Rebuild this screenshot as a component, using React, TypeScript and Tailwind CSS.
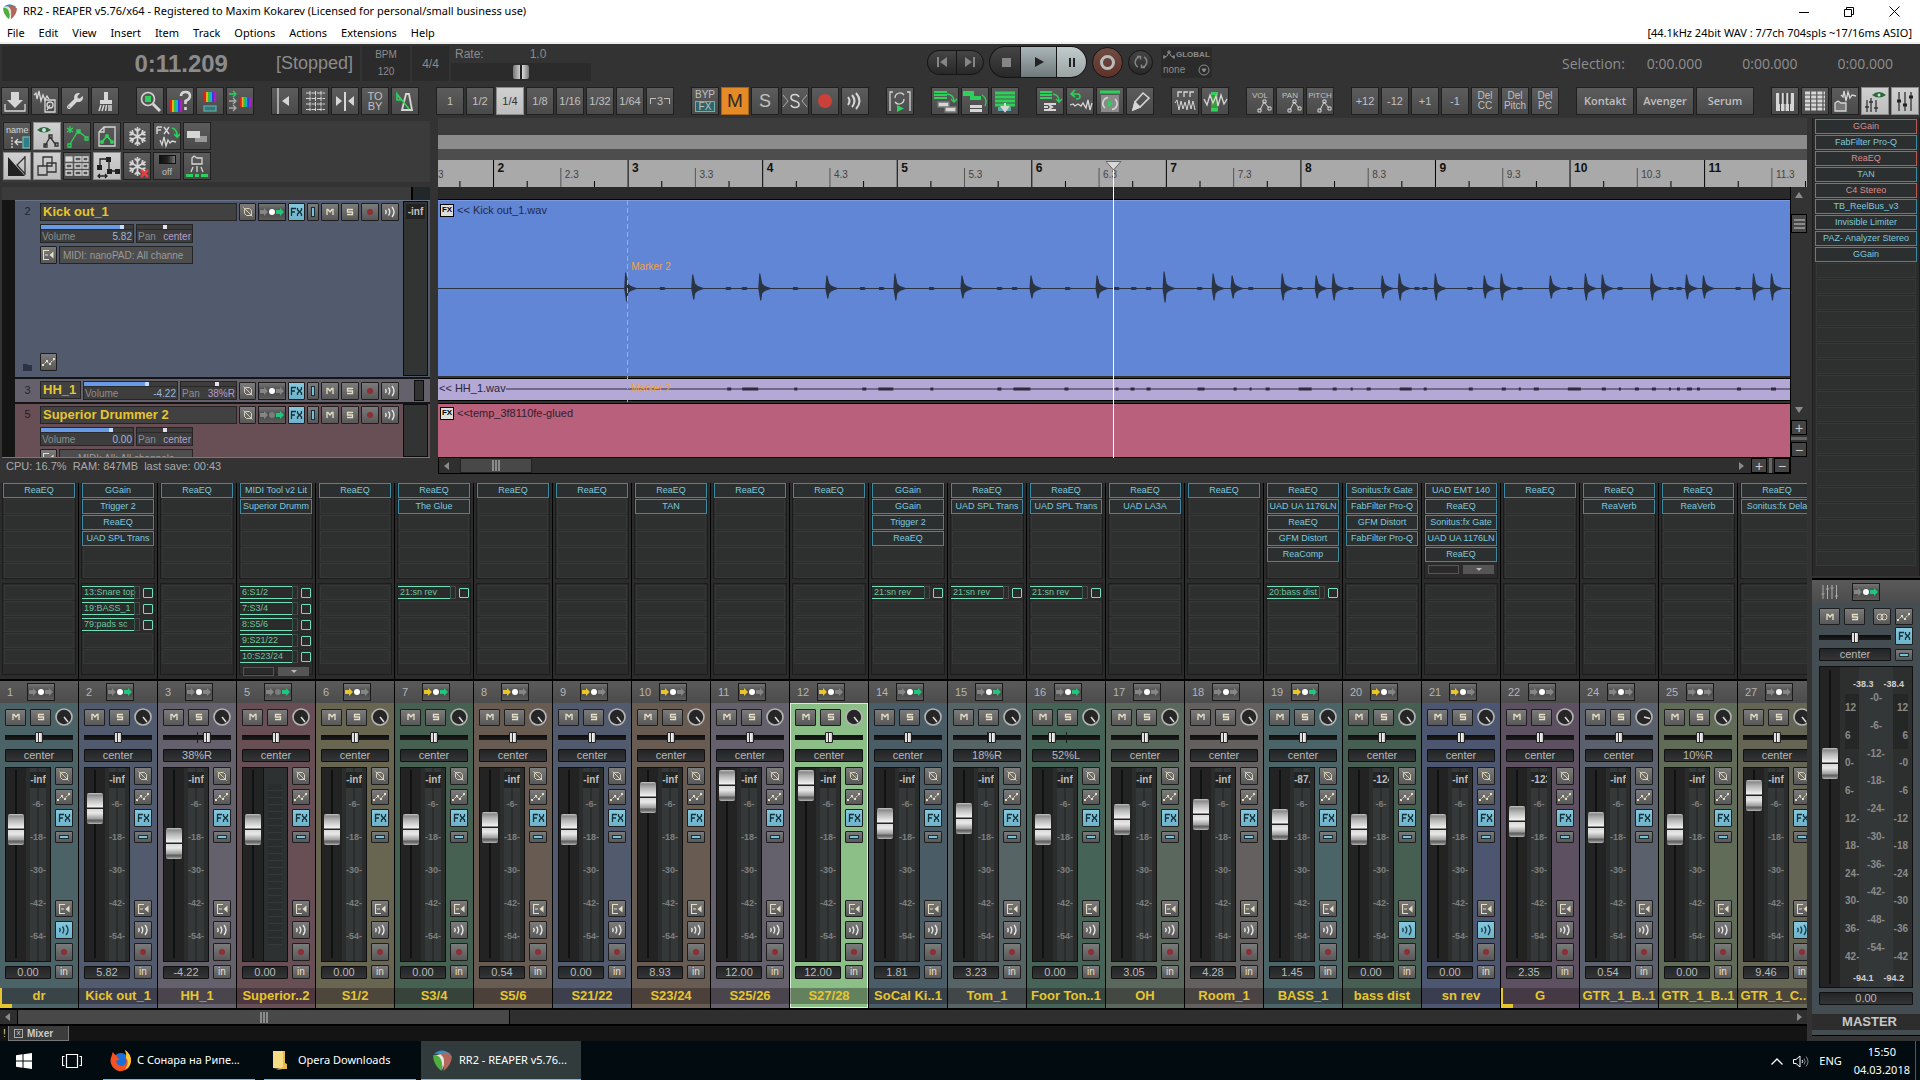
import React from "react";
import clsx from "clsx";
import { FaWrench, FaRegSnowflake } from "react-icons/fa";

type Io = "none" | "send" | "recv" | "both" | "midi";

interface Track {
  num: number;
  name: string;
  color: string;
  vol: string;
  fader: number;
  pan?: string;
  panPos?: number;
  io: Io;
  fx: string[];
  sends?: string[];
  peak?: string;
  monitor?: boolean;
  folder?: boolean;
  selected?: boolean;
}

const tracks: Track[] = [
  { num: 1, name: "dr", color: "bg-[#4b6266]", vol: "0.00", fader: 113, io: "none", fx: ["ReaEQ"], monitor: true, folder: true },
  { num: 2, name: "Kick out_1", color: "bg-[#525a6e]", vol: "5.82", fader: 134, io: "send", fx: ["GGain", "Trigger 2", "ReaEQ", "UAD SPL Trans"], sends: ["13:Snare top", "19:BASS_1", "79:pads sc"] },
  { num: 3, name: "HH_1", color: "bg-[#65616c]", vol: "-4.22", fader: 99, pan: "38%R", panPos: 67, io: "none", fx: ["ReaEQ"] },
  { num: 5, name: "Superior..2", color: "bg-[#684f56]", vol: "0.00", fader: 113, io: "midi", fx: ["MIDI Tool v2 Lit", "Superior Drumm"], sends: ["6:S1/2", "7:S3/4", "8:S5/6", "9:S21/22", "10:S23/24"] },
  { num: 6, name: "S1/2", color: "bg-[#686651]", vol: "0.00", fader: 113, io: "recv", fx: ["ReaEQ"] },
  { num: 7, name: "S3/4", color: "bg-[#466052]", vol: "0.00", fader: 113, io: "both", fx: ["ReaEQ", "The Glue"], sends: ["21:sn rev"] },
  { num: 8, name: "S5/6", color: "bg-[#685b51]", vol: "0.54", fader: 115, io: "recv", fx: ["ReaEQ"] },
  { num: 9, name: "S21/22", color: "bg-[#525a6e]", vol: "0.00", fader: 113, io: "recv", fx: ["ReaEQ"] },
  { num: 10, name: "S23/24", color: "bg-[#685b51]", vol: "8.93", fader: 145, io: "recv", fx: ["ReaEQ", "TAN"] },
  { num: 11, name: "S25/26", color: "bg-[#65616c]", vol: "12.00", fader: 157, io: "recv", fx: ["ReaEQ"] },
  { num: 12, name: "S27/28", color: "bg-[#8cbf88]", vol: "12.00", fader: 157, io: "recv", fx: ["ReaEQ"], selected: true },
  { num: 14, name: "SoCal Ki..1", color: "bg-[#4a5c66]", vol: "1.81", fader: 119, io: "send", fx: ["GGain", "GGain", "Trigger 2", "ReaEQ"], sends: ["21:sn rev"] },
  { num: 15, name: "Tom_1", color: "bg-[#576466]", vol: "3.23", fader: 124, pan: "18%R", panPos: 58, io: "send", fx: ["ReaEQ", "UAD SPL Trans"], sends: ["21:sn rev"] },
  { num: 16, name: "Foor Ton..1", color: "bg-[#466357]", vol: "0.00", fader: 113, pan: "52%L", panPos: 26, io: "send", fx: ["ReaEQ", "UAD SPL Trans"], sends: ["21:sn rev"] },
  { num: 17, name: "OH", color: "bg-[#5a675d]", vol: "3.05", fader: 123, io: "none", fx: ["ReaEQ", "UAD LA3A"] },
  { num: 18, name: "Room_1", color: "bg-[#656060]", vol: "4.28", fader: 128, io: "none", fx: ["ReaEQ"] },
  { num: 19, name: "BASS_1", color: "bg-[#4a6468]", vol: "1.45", fader: 118, io: "both", fx: ["ReaEQ", "UAD UA 1176LN", "ReaEQ", "GFM Distort", "ReaComp"], sends: ["20:bass dist"], peak: "-87." },
  { num: 20, name: "bass dist", color: "bg-[#465f52]", vol: "0.00", fader: 113, io: "recv", fx: ["Sonitus:fx Gate", "FabFilter Pro-Q", "GFM Distort", "FabFilter Pro-Q"], peak: "-124", monitor: true },
  { num: 21, name: "sn rev", color: "bg-[#4c5670]", vol: "0.00", fader: 113, io: "recv", fx: ["UAD EMT 140", "ReaEQ", "Sonitus:fx Gate", "UAD UA 1176LN", "ReaEQ"], monitor: true },
  { num: 22, name: "G", color: "bg-[#5d5061]", vol: "2.35", fader: 121, io: "none", fx: ["ReaEQ"], peak: "-123", folder: true },
  { num: 24, name: "GTR_1_B..1", color: "bg-[#5a616c]", vol: "0.54", fader: 115, io: "none", fx: ["ReaEQ", "ReaVerb"] },
  { num: 25, name: "GTR_1_B..1", color: "bg-[#616c58]", vol: "0.00", fader: 113, pan: "10%R", panPos: 53, io: "none", fx: ["ReaEQ", "ReaVerb"] },
  { num: 27, name: "GTR_1_C..1", color: "bg-[#656555]", vol: "9.46", fader: 147, io: "none", fx: ["ReaEQ", "Sonitus:fx Dela"], monitor: true },
];

const masterFx = [
  { name: "GGain", off: true },
  { name: "FabFilter Pro-Q" },
  { name: "ReaEQ", off: true },
  { name: "TAN" },
  { name: "C4 Stereo", off: true },
  { name: "TB_ReelBus_v3" },
  { name: "Invisible Limiter" },
  { name: "PAZ- Analyzer Stereo" },
  { name: "GGain" },
];

const range = (n: number) => Array.from({ length: n }, (_, i) => i);

/* ---------- small shared pieces ---------- */

const ReaperLogo = ({ className }: { className?: string }) => (
  <svg viewBox="0 0 20 22" className={className}>
    <path d="M2 5Q9-2 18 5L13 8Q9 3 2 5Z" fill="#2f94c9" />
    <path d="M7 5Q14 1 19 7Q19 15 11 21Q13 9 7 5Z" fill="#b5665a" />
    <path d="M1 6Q7 5 9 10Q11 15 9 21Q1 15 1 6Z" fill="#4fae3c" />
    <path d="M3 6Q10 6 10 20Q14 9 8 5Z" fill="#e8e4e0" />
  </svg>
);

interface MiniProps {
  label: string;
  className?: string;
  on?: boolean;
  children?: React.ReactNode;
}

const Mini: React.FC<MiniProps> = ({ label, className, on, children }) => (
  <button
    aria-label={label}
    className={clsx(
      "flex shrink-0 items-center justify-center overflow-hidden rounded-[1px] border border-[#1e1e1e] text-[10px] leading-none",
      on ? "bg-linear-to-b from-[#86c8de] to-[#6db3cb] text-[#173039]" : "bg-linear-to-b from-[#7c7c7c] to-[#585858] text-[#e6dfc4]",
      className,
    )}
  >
    {children}
  </button>
);

const MuteIcon = () => (
  <svg width="8" height="8" viewBox="0 0 8 8" fill="none" stroke="#e6dfc4" strokeWidth="1.300">
    <path d="M1 7V1.500H2L4 4L6 1.500H7V7" />
  </svg>
);
const SoloIcon = () => (
  <svg width="8" height="8" viewBox="0 0 8 8" fill="none" stroke="#e6dfc4" strokeWidth="1.300">
    <path d="M7 1.500H1.500V4H6.500V6.500H1" />
  </svg>
);
const PhaseIcon = () => (
  <svg width="10" height="10" viewBox="0 0 10 10" fill="none" stroke="#d8d0b4">
    <path d="M2.500 1.500H6.500L8.500 3.500V8.500H3.500L1.500 6.500V2.500ZM.5.500L9.500 9.500" />
  </svg>
);
const EnvIcon = () => (
  <svg width="14" height="10" viewBox="0 0 14 10" fill="none" stroke="#e6dfc4">
    <path d="M1 8L4.500 4.500L7.500 6.500L12 2.500" strokeDasharray="2 .6" />
    <path d="M0 8h2M4 4h2M7 7h2M11 2h2" strokeWidth="2" />
  </svg>
);
const InputIcon = () => (
  <svg width="11" height="10" viewBox="0 0 11 10" fill="none" stroke="#e6dfc4">
    <path d="M6 .5H.5V9.500H6M2 5H5" strokeWidth="1.200" />
    <path d="M10.500 1.500V8.500L6.500 5Z" fill="#e6dfc4" stroke="none" />
  </svg>
);
const WavesIcon = ({ dark }: { dark?: boolean }) => (
  <svg width="13" height="12" viewBox="0 0 13 12" fill="none" stroke={dark ? "#1d4350" : "#e4e4e4"} strokeWidth="1.400">
    <path d="M1.500 4Q3 6 1.500 8M4.500 2.500Q7 6 4.500 9.500M8 1Q12 6 8 11" />
  </svg>
);
const FxIcon = () => (
  <svg width="13" height="10" viewBox="0 0 13 10" fill="none" stroke="#143038" strokeWidth="1.300">
    <path d="M1.500 9V1.500H6M1.500 5H5M7.500 1V3L9.500 5L11.500 3V1M7.500 9V7L9.500 5L11.500 7V9" />
  </svg>
);
const RecDot = () => <span className="size-[6px] rounded-full bg-[#8b3034]" />;

const IoButton = ({ io }: { io: Io }) => {
  const left = io === "recv" || io === "both" ? "#e8c62c" : "#858585";
  const right = io === "send" || io === "both" || io === "midi" ? "#23c57d" : "#858585";
  return (
    <button aria-label="Routing" className="h-[18px] w-[28px] shrink-0 border border-[#1a1a1a] bg-linear-to-b from-[#747474] via-[#4a4a4a] to-[#5c5c5c]">
      <svg width="26" height="16" viewBox="0 0 26 16">
        <path d="M1 6H5V4L9 8L5 12V10H1Z" fill={left} />
        <path d="M17 6H21V4L25 8L21 12V10H17Z" fill={right} />
        <circle cx="13" cy="8" r="3" fill={io === "midi" ? "#7c7c7c" : "#fff"} />
      </svg>
    </button>
  );
};

const Fader = ({ value, max, label, tall }: { value: number; max: number; label: string; tall?: boolean }) => (
  <input
    type="range"
    aria-label={label}
    min={0}
    max={max}
    defaultValue={value}
    className={clsx(
      "w-[16px] appearance-none [direction:rtl] [writing-mode:vertical-lr]",
      "bg-[linear-gradient(90deg,transparent_7px,#0f1212_7px,#0f1212_9px,transparent_9px)]",
      "[&::-webkit-slider-thumb]:h-[31px] [&::-webkit-slider-thumb]:w-[16px] [&::-webkit-slider-thumb]:appearance-none [&::-webkit-slider-thumb]:rounded-[2px]",
      "[&::-webkit-slider-thumb]:bg-[linear-gradient(180deg,#c8c8c8_0,#8a8a8a_2px,#b4b4b4_6px,#f2f2f2_14px,#222_15px,#222_16px,#d8d8d8_16px,#e8e8e8_20px,#9a9a9a_26px,#5c5c5c_27px,#777_29px,#bbb_31px)]",
      tall ? "h-[314px]" : "h-[188px]",
    )}
  />
);

const PanSlider = ({ value = 50, label }: { value?: number; label: string }) => (
  <input
    type="range"
    aria-label={label}
    defaultValue={value}
    className={clsx(
      "block h-[11px] w-full appearance-none",
      "bg-[linear-gradient(#1a1a1a,#1a1a1a),linear-gradient(180deg,transparent_3px,#0e0e0e_3px,#1c1c1c_8px,transparent_8px)] bg-[length:1px_100%,100%_100%] bg-center bg-no-repeat",
      "[&::-webkit-slider-thumb]:h-[11px] [&::-webkit-slider-thumb]:w-[8px] [&::-webkit-slider-thumb]:appearance-none [&::-webkit-slider-thumb]:rounded-[1px] [&::-webkit-slider-thumb]:border [&::-webkit-slider-thumb]:border-[#222]",
      "[&::-webkit-slider-thumb]:bg-[linear-gradient(90deg,#ddd_2px,#333_2px,#333_3px,#fff_3px,#bbb_6px)]",
    )}
  />
);

const Readout = ({ children, className }: { children: React.ReactNode; className?: string }) => (
  <div className={clsx("h-[13px] rounded-[1px] border border-[#111] bg-linear-to-b from-[#222425] to-[#333536] text-center text-[11px] leading-[11px] text-[#b9b9b9]", className)}>
    {children}
  </div>
);

/* ---------- toolbar ---------- */

const G = "#2fd05a";
const L = "#d6d6d6";

interface ToolProps {
  label: string;
  on?: boolean;
  orange?: boolean;
  wide?: boolean;
  children?: React.ReactNode;
}

const Tool: React.FC<ToolProps> = ({ label, on, orange, wide, children }) => (
  <button
    aria-label={label}
    className={clsx(
      "flex h-[28px] shrink-0 items-center justify-center overflow-hidden border text-center text-[11px] leading-[10px]",
      wide ? "w-[58px] font-['Open_Sans',sans-serif] font-semibold" : "w-[28px]",
      on && "border-[#8a8a8a] bg-linear-to-b from-[#d0d0d0] to-[#bdbdbd] text-[#333]",
      orange && "border-[#a86413] bg-[#e58a25] text-[19px] text-[#2a2a2a]",
      !on && !orange && "border-[#202020] bg-linear-to-b from-[#5c5c5c] to-[#4a4a4a] text-[#c0c0c0]",
    )}
  >
    {children}
  </button>
);

const Ico = ({ children }: { children: React.ReactNode }) => (
  <svg width="26" height="26" viewBox="1 1 26 26" fill="none" stroke={L} strokeWidth="1.300">
    {children}
  </svg>
);

const Rainbow = ({ x, y, w, h }: { x: number; y: number; w: number; h: number }) => (
  <g stroke="none">
    {["#e02020", "#e8b020", "#30c030", "#20b0c0", "#3040e0", "#b020c0"].map((c, i) => (
      <rect key={c} x={x + (i * w) / 6} y={y} width={w / 6 + 0.2} height={h} fill={c} />
    ))}
  </g>
);

const ToolGroup = ({ children }: { children: React.ReactNode }) => <div className="flex gap-[2px]">{children}</div>;

const Toolbar = () => (
  <div className="flex h-[31px] items-start gap-[17px] bg-[#333] px-px">
    <ToolGroup>
      <Tool label="Save"><Ico><path d="M10 5h8v8h4l-8 8l-8-8h4z" fill={L} stroke="none" /><path d="M4 17v7h20v-7" /></Ico></Tool>
      <Tool label="Project media"><Ico><path d="M3 8l2-2l1 6l2-8l2 10l2-6l2 5l2-4l2 3" /><path d="M14 13h10v12h-10zM16 18a3 3 0 1 0 6 0a3 3 0 1 0-6 0M19 18l-3 5" /></Ico></Tool>
      <Tool label="Preferences"><FaWrench size={16} color={L} /></Tool>
      <Tool label="Clean project"><Ico><path d="M13 5h4v8h4v4H9v-4h4z" fill={L} stroke="none" /><path d="M10 18L8 24M13 18L11 24M15.500 18L14.500 24M18 18V24M20 18V24" strokeWidth="1.500" /></Ico></Tool>
    </ToolGroup>
    <ToolGroup>
      <Tool label="Zoom to selection"><Ico><circle cx="12" cy="12" r="6.500" strokeWidth="1.600" /><path d="M17 17L24 24" strokeWidth="3" /><rect x="9" y="9" width="6" height="6" fill={G} stroke="none" /></Ico></Tool>
      <Tool label="Random colors"><Ico><Rainbow x={4} y={13} w={12} h={12} /><path d="M15 9Q15 5 19.500 5Q24 5 24 9Q24 12 19.500 14V17M19.500 20V23" strokeWidth="2.600" /></Ico></Tool>
      <Tool label="Track colors"><Ico><Rainbow x={8} y={5} w={12} h={10} /><rect x="8" y="19" width="12" height="5" fill="#33797a" stroke="#5ea7a5" /></Ico></Tool>
      <Tool label="Copy colors"><Ico><Rainbow x={14} y={10} w={11} h={10} /><path d="M3 7h6M7 4l3 3l-3 3" stroke={G} /><path d="M3 14h6M7 11l3 3l-3 3M3 21h6M7 18l3 3l-3 3" stroke="#aaa" /></Ico></Tool>
    </ToolGroup>
    <ToolGroup>
      <Tool label="Go to edge"><Ico><path d="M7 1V27" /><path d="M18 9v10l-7-5z" fill={L} stroke="none" /></Ico></Tool>
      <Tool label="Grid"><Ico><path d="M5 6H24M5 11.500H24M5 17H24M5 22.500H24M9 4V24M14.500 4V24M20 4V24" strokeWidth="1" strokeDasharray="4.500 1" /></Ico></Tool>
      <Tool label="Snap"><Ico><path d="M14 5V24" strokeWidth="2" /><path d="M5 9v10l6-5zM23 9v10l-6-5z" fill={L} stroke="none" /></Ico></Tool>
      <Tool label="To by"><span>TO<br />BY</span></Tool>
      <Tool label="Metronome"><Ico><path d="M11 23L15 7H18L21 23Z" strokeWidth="1.800" /><path d="M6 7L18 22M6 7v6h4z" stroke={G} strokeWidth="1.600" /></Ico></Tool>
    </ToolGroup>
    <ToolGroup>
      {["1", "1/2", "1/4", "1/8", "1/16", "1/32", "1/64"].map((t) => (
        <Tool key={t} label={`Grid ${t}`} on={t === "1/4"}>{t}</Tool>
      ))}
      <Tool label="Triplet"><span className="flex items-center gap-px"><svg width="6" height="6" viewBox="0 0 6 6" fill="none" stroke="#c0c0c0"><path d="M.5 6V.5H6" /></svg>3<svg width="6" height="6" viewBox="0 0 6 6" fill="none" stroke="#c0c0c0"><path d="M0 .5H5.500V6" /></svg></span></Tool>
    </ToolGroup>
    <ToolGroup>
      <Tool label="Bypass FX">
        <span className="flex flex-col items-center gap-px text-[10px]">BYP<span className="border border-[#6cb3b0] bg-[#2f6668] px-[3px] text-[10px] leading-[9px]">FX</span></span>
      </Tool>
      <Tool label="Mute" orange>M</Tool>
      <Tool label="Solo"><span className="text-[18px]">S</span></Tool>
      <Tool label="Unsolo all"><Ico><path d="M2 8L7 14L2 20M26 8L21 14L26 20" stroke="#aaa" strokeWidth="1" /><path d="M18 10Q17 7.500 14 7.500Q10 7.500 10 10.500Q10 13 14 14Q18 15 18 17.500Q18 20.500 14 20.500Q11 20.500 10 18" strokeWidth="1.600" /></Ico></Tool>
      <Tool label="Record arm"><span className="size-[14px] rounded-full bg-[#cc403a]" /></Tool>
      <Tool label="Monitor"><Ico><path d="M7 10Q10 14 7 18M11 8Q16 14 11 20M15 6Q22 14 15 22" strokeWidth="2" /></Ico></Tool>
    </ToolGroup>
    <ToolGroup>
      <Tool label="Loop play"><Ico><path d="M7 5H4V24M21 5H24V24M9 11A5 5 0 0 1 18 8M18 12A5 5 0 0 1 9 15" /><path d="M11 18v7l7-3.500z" fill={G} stroke="none" /></Ico></Tool>
    </ToolGroup>
    <ToolGroup>
      <Tool label="Copy items"><Ico><path d="M3 5h13M3 8h13M3 11h13" stroke={G} strokeWidth="2" /><path d="M16 7Q23 8 23 14M20 12l3 3l3-3" stroke={G} /><path d="M7 15h11v5H7zM14 20h11v5H14z" fill={L} stroke="#777" /></Ico></Tool>
      <Tool label="Implode items"><Ico><path d="M2 4h11v5H2zM9 9h11v4H9z" fill={G} stroke="none" /><path d="M21 8Q27 12 24 19" stroke={G} /><path d="M9 18h12v3H9zM9 22h12v3H9z" fill={L} stroke="none" /></Ico></Tool>
      <Tool label="Render"><Ico><path d="M4 6h20M4 10h20M4 14h20M4 18h20" stroke={G} strokeWidth="3" /><path d="M7 22h13" stroke="#5ea7a5" strokeWidth="4" /><path d="M14 16v6M11 20l3 4l3-4z" fill={L} strokeWidth="2" /></Ico></Tool>
    </ToolGroup>
    <ToolGroup>
      <Tool label="Glue"><Ico><path d="M4 5h12M4 8h12M4 11h12" stroke={G} strokeWidth="2" /><path d="M17 7Q23 8 23 14M20 12l3 3l3-3" stroke={G} /><path d="M8 17h12M8 20h4M8 23h12M13 18l3 2l-3 2" strokeWidth="2" /></Ico></Tool>
      <Tool label="Revert"><Ico><path d="M9 3L5 7L9 10M5 7h7Q14 7 14 10Q14 12 10 12" stroke={G} strokeWidth="1.600" /><path d="M4 18l3-1l2 2l3-2l3 2l2-3l3 5l2-8l2 10l2-7" /></Ico></Tool>
      <Tool label="Loop source"><Ico><path d="M4 5H24" stroke={G} strokeWidth="3" /><rect x="5" y="8" width="18" height="17" fill="#8a8a8a" stroke="none" /><path d="M9 21A6 6 0 0 1 12 10.500M19 12A6 6 0 0 1 16 22.500" strokeWidth="1.600" /><path d="M12 13v7l5-3.500z" fill={G} stroke="none" /></Ico></Tool>
      <Tool label="Paint"><Ico><path d="M7 23L9 15L17 6L23 11L14 20Z" strokeWidth="1.600" /><path d="M7 23L9 15L14 20Z" fill={L} /></Ico></Tool>
    </ToolGroup>
    <ToolGroup>
      <Tool label="Transients"><Ico><path d="M7 10V5H11M13 10V5H17M19 10V5H23" /><path d="M4 16l2-3l2 10l2-9l2 8l2-7l2 8l2-10l2 9l2-8l2 9" strokeWidth="1" /></Ico></Tool>
      <Tool label="Stretch"><Ico><rect x="10" y="5" width="7" height="20" fill="#3c9a3a" stroke="none" /><path d="M10 5h7v3h-7zM10 21h7v3h-7z" fill={G} stroke="none" /><path d="M3 12l3 6l3-10l3 8l3-7l2 10l3-11l3 9l3-5" /></Ico></Tool>
    </ToolGroup>
    <ToolGroup>
      {["VOL", "PAN", "PiTCH"].map((t) => (
        <Tool key={t} label={`${t} envelope`}>
          <span className="relative block h-[26px] w-[26px] pt-[3px] text-[8px]">
            {t}
            <svg className="absolute inset-0" width="26" height="26" viewBox="0 0 26 26" fill="none" stroke={L}><path d="M13 22L17 14L22 20M11 21h3v3h-3zM16 12h3v3h-3zM21 19h3v3h-3z" /></svg>
          </span>
        </Tool>
      ))}
    </ToolGroup>
    <ToolGroup>
      {["+12", "-12", "+1", "-1"].map((t) => <Tool key={t} label={t}>{t}</Tool>)}
      {["CC", "Pitch", "PC"].map((t) => (
        <Tool key={t} label={`Delete ${t}`}><span className="text-[10px]">Del<br />{t}</span></Tool>
      ))}
    </ToolGroup>
    <ToolGroup>
      {["Kontakt", "Avenger", "Serum"].map((t) => <Tool key={t} label={t} wide>{t}</Tool>)}
    </ToolGroup>
    <ToolGroup>
      <Tool label="Piano roll"><Ico><path d="M5 6h18v18H5z" fill={L} stroke="none" /><path d="M9.500 6V24M14 6V24M18.500 6V24" stroke="#444" strokeWidth="1" /><path d="M9.500 6V17M14 6V17M18.500 6V17" stroke="#444" strokeWidth="2.500" /></Ico></Tool>
      <Tool label="Event list"><Ico><path d="M4 6H24M4 10H24M4 14H24M4 18H24M4 22H24" strokeWidth="3" strokeDasharray="5 1.200" /></Ico></Tool>
      <Tool label="Media explorer"><Ico><path d="M10 8l2 2l1-6l2 10l2-9l2 6l2-3l4 1" /><path d="M4 24V16L7 14L10 16H15V24Z" fill="#777" /></Ico></Tool>
      <Tool label="Show mixer" on><Ico><path d="M11 8Q18 2 25 8Q18 13 11 8Z" fill="#2c6a35" stroke="none" /><circle cx="18" cy="8" r="1.500" fill="#cde" stroke="none" /><path d="M6 13V25M10 11V25M15 13V25M4 20h4M8 15h4M13 21h4" stroke="#333" /></Ico></Tool>
      <Tool label="Mixer" on><Ico><path d="M8 5V24M14 5V24M20 5V24" stroke="#333" /><path d="M6 14h4M12 18h4M18 10h4" stroke="#222" strokeWidth="3" /></Ico></Tool>
    </ToolGroup>
  </div>
);

/* ---------- transport ---------- */

const pill = "flex items-center justify-center border-y border-[#151515] bg-linear-to-b from-[#454545] to-[#282828]";

const Transport = () => (
  <div className="flex h-[43px] items-start bg-[#333] pt-[2px] pl-[2px]">
    <div className="flex gap-[2px] text-[#8b8b8b]">
      <div className="flex h-[35px] w-[358px] items-center justify-end gap-[48px] bg-[#2b2b2b] pr-[7px]">
        <span className="text-[24px] font-bold">0:11.209</span>
        <span className="text-[18px]">[Stopped]</span>
      </div>
      <div className="flex h-[35px] w-[48px] flex-col items-center justify-around bg-[#2b2b2b] text-[10px] leading-[12px]">
        <span>BPM</span>
        <span>120</span>
      </div>
      <div className="flex h-[35px] w-[37px] items-center justify-center bg-[#2b2b2b] text-[12px]">4/4</div>
      <div className="w-[140px]">
        <label htmlFor="rate" className="flex h-[17px] gap-[46px] pl-[4px] text-[12px] leading-[17px]">
          <span>Rate:</span>
          <span>1.0</span>
        </label>
        <input
          id="rate"
          type="range"
          defaultValue={50}
          className="block h-[18px] w-full appearance-none bg-[#2b2b2b] [&::-webkit-slider-thumb]:h-[14px] [&::-webkit-slider-thumb]:w-[16px] [&::-webkit-slider-thumb]:appearance-none [&::-webkit-slider-thumb]:rounded-[2px] [&::-webkit-slider-thumb]:bg-[linear-gradient(90deg,#777,#ccc_7px,#222_7px,#222_9px,#ddd_9px,#777)]"
        />
      </div>
    </div>
    <div className="flex flex-1 items-center pl-[336px]">
      <button aria-label="Previous" className={clsx(pill, "h-[25px] w-[29px] rounded-l-full border-l")}>
        <svg width="12" height="10" viewBox="0 0 12 10" fill="#868686"><path d="M1 0h2v10H1zM11 0v10L4 5z" /></svg>
      </button>
      <button aria-label="Next" className={clsx(pill, "mr-[5px] h-[25px] w-[28px] rounded-r-full border-x")}>
        <svg width="12" height="10" viewBox="0 0 12 10" fill="#868686"><path d="M9 0h2v10H9zM1 0v10l7-5z" /></svg>
      </button>
      <button aria-label="Stop" className={clsx(pill, "h-[32px] w-[31px] rounded-l-full border-l")}>
        <span className="ml-[3px] size-[9px] bg-[#868686]" />
      </button>
      <button aria-label="Play" className="flex h-[32px] w-[37px] items-center justify-center border border-[#151515] bg-linear-to-b from-[#aab6b9] to-[#6f7a7c]">
        <svg width="10" height="10" viewBox="0 0 10 10"><path d="M1 0v10l9-5z" fill="#222" /></svg>
      </button>
      <button aria-label="Pause" className="mr-[5px] flex h-[32px] w-[30px] items-center justify-center gap-[2px] rounded-r-full border-y border-r border-[#151515] bg-linear-to-b from-[#c3cccc] to-[#9ba4a5]">
        <span className="h-[9px] w-[2px] bg-[#222]" />
        <span className="h-[9px] w-[2px] bg-[#222]" />
      </button>
      <button aria-label="Record" className="mr-[5px] flex size-[31px] items-center justify-center rounded-full border border-[#151515] bg-linear-to-b from-[#6f4c43] to-[#5e3328]">
        <span className="size-[15px] rounded-full border-[3px] border-[#bbb]" />
      </button>
      <button aria-label="Repeat" className="mr-[8px] flex size-[25px] items-center justify-center rounded-full border border-[#151515] bg-linear-to-b from-[#454545] to-[#282828]">
        <svg width="14" height="14" viewBox="0 0 14 14" fill="none" stroke="#868686" strokeWidth="1.500"><path d="M4 12A5.500 5.500 0 0 1 5 2M10 2A5.500 5.500 0 0 1 9 12M3 1.500h3.500v3M11 12.500H7.500v-3" /></svg>
      </button>
      <div className="flex h-[31px] w-[51px] flex-col justify-between bg-[#2b2b2b] p-[2px] text-[9px] leading-[12px] text-[#8b8b8b]">
        <span className="flex items-center gap-px text-[8px] font-bold">
          <svg width="12" height="9" viewBox="0 0 12 9" fill="none" stroke="#8b8b8b"><path d="M1 7L4 6L6 2L8 6L11 7M0 6h2v2H0zM5 1h2v2H5zM10 6h2v2h-2z" /></svg>
          GLOBAL
        </span>
        <button className="flex items-center justify-between text-[10px]">
          none
          <svg width="12" height="12" viewBox="0 0 12 12" fill="none" stroke="#8b8b8b"><circle cx="6" cy="6" r="5" /><path d="M4 5h4L6 8z" fill="#8b8b8b" /></svg>
        </button>
      </div>
    </div>
    <div className="flex h-[35px] items-center pr-[27px] font-['Open_Sans',sans-serif] text-[14px] text-[#8f8f8f]">
      <span className="mr-[22px]">Selection:</span>
      <span className="mr-[40px]">0:00.000</span>
      <span className="mr-[40px]">0:00.000</span>
      <span>0:00.000</span>
    </div>
  </div>
);

/* ---------- track control panel ---------- */

const ParamBar = ({ name, value, fill, pan, className }: { name: string; value: string; fill: number; pan?: boolean; className?: string }) => (
  <label className={clsx("block h-[19px] overflow-hidden border border-[#252525] bg-[#3d3d3d] text-[10px]", className)}>
    <input
      type="range"
      defaultValue={fill}
      className={clsx(
        "block h-[5px] w-full appearance-none border-b border-[#2a2a2a] bg-no-repeat [&::-webkit-slider-thumb]:size-[4px] [&::-webkit-slider-thumb]:appearance-none",
        pan ? "[&::-webkit-slider-thumb]:bg-[#e8e0ee]" : "bg-[linear-gradient(#679be8,#679be8)] [&::-webkit-slider-thumb]:bg-[#c3dcff]",
      )}
      style={{ backgroundSize: `${pan ? 0 : fill}% 100%` }}
    />
    <span className="flex justify-between px-px leading-[13px]">
      <span className="text-[#8d8d8d]">{name}</span>
      <span className={pan ? "text-[#b79cc6]" : "text-[#9db4d8]"}>{value}</span>
    </span>
  </label>
);

const TrackButtons = ({ io }: { io: Io }) => (
  <div className="flex gap-[2px] pl-[2px]">
    <Mini label="Phase" className="h-[18px] w-[17px]"><PhaseIcon /></Mini>
    <IoButton io={io} />
    <Mini label="FX" on className="h-[18px] w-[17px]"><FxIcon /></Mini>
    <Mini label="FX bypass" className="h-[18px] w-[12px]"><span className="h-[10px] w-[4px] border border-[#173039] bg-[#7cc0d6]" /></Mini>
    <Mini label="Mute" className="h-[18px] w-[18px]"><MuteIcon /></Mini>
    <Mini label="Solo" className="h-[18px] w-[18px]"><SoloIcon /></Mini>
    <Mini label="Record arm" className="h-[18px] w-[18px]"><RecDot /></Mini>
    <Mini label="Monitor" className="h-[18px] w-[18px]"><WavesIcon /></Mini>
  </div>
);

const nameBox = "h-[18px] min-w-0 border border-[#252525] bg-[#414141] px-[2px] text-[13px] font-bold text-[#e6c52e] outline-none";

const InputRow = ({ text, center }: { text: string; center?: boolean }) => (
  <div className="mt-[3px] flex gap-[2px]">
    <Mini label="Input" className="h-[18px] w-[17px]"><InputIcon /></Mini>
    <select aria-label="Record input" className={clsx("h-[18px] w-[134px] appearance-none border border-[#252525] bg-[#4d4d4d] px-[3px] text-[10px] text-[#9a9a9a]", center && "text-center")}>
      <option>{text}</option>
    </select>
  </div>
);

const TrackPanel = () => (
  <div className="flex h-[257px] overflow-hidden bg-[#151515]">
    <div className="flex-1 pl-[13px]">
      <div className="flex h-[177px] bg-[#525a6e] pt-[3px] shadow-[inset_0_1px_0_#6a7286]">
        <div className="flex w-[25px] flex-col items-center justify-between pb-[6px] text-[11px] text-[#1e2430]">
          <span>2</span>
          <svg width="9" height="7" viewBox="0 0 9 7" fill="#2c3344"><path d="M0 0h4l1 1h4v6H0z" /></svg>
        </div>
        <div className="flex w-[197px] flex-col">
          <input aria-label="Track name" className={nameBox} defaultValue="Kick out_1" />
          <div className="mt-[3px] flex gap-[2px]">
            <ParamBar name="Volume" value="5.82" fill={90} className="w-[94px]" />
            <ParamBar name="Pan" value="center" fill={50} pan className="w-[57px]" />
          </div>
          <InputRow text="MIDI: nanoPAD: All channe" />
          <Mini label="Envelopes" className="mt-auto mb-[6px] h-[18px] w-[17px]"><EnvIcon /></Mini>
        </div>
        <TrackButtons io="send" />
        <div className="-mt-[2px] mr-[2px] ml-auto h-[175px] w-[25px] border border-[#0c0c0c] bg-[#313433]">
          <p className="m-[2px] bg-[#222] text-center text-[10px] leading-[15px] font-bold text-[#c0c0c0]">-inf</p>
        </div>
      </div>
      <div className="mt-[2px] flex h-[23px] items-center bg-[#65616c]">
        <span className="w-[25px] text-center text-[11px] text-[#26232b]">3</span>
        <div className="flex w-[197px] gap-[2px]">
          <input aria-label="Track name" className={clsx(nameBox, "w-[41px]")} defaultValue="HH_1" />
          <ParamBar name="Volume" value="-4.22" fill={68} className="w-[95px]" />
          <ParamBar name="Pan" value="38%R" fill={66} pan className="w-[57px]" />
        </div>
        <TrackButtons io="none" />
        <div className="mr-[6px] ml-auto h-[21px] w-[10px] border border-[#0c0c0c] bg-[#313433]" />
      </div>
      <div className="mt-[2px] flex h-[53px] bg-[#684f56] pt-[2px]">
        <span className="w-[25px] text-center text-[11px] text-[#2a1c20]">5</span>
        <div className="flex w-[197px] flex-col">
          <input aria-label="Track name" className={nameBox} defaultValue="Superior Drummer 2" />
          <div className="mt-[3px] flex gap-[2px]">
            <ParamBar name="Volume" value="0.00" fill={77} className="w-[94px]" />
            <ParamBar name="Pan" value="center" fill={50} pan className="w-[57px]" />
          </div>
          <InputRow text="MIDI: All: All channels" center />
        </div>
        <TrackButtons io="midi" />
        <div className="-mt-[2px] mr-[2px] ml-auto w-[25px] border border-[#0c0c0c] bg-[#313433]" />
      </div>
    </div>
  </div>
);

const SideTools = () => (
  <div className="h-[61px] bg-[#3b3b3b] pt-px pl-px">
    <div className="grid w-fit grid-cols-7 gap-x-[2px] gap-y-[2px]">
      <Tool label="Name column"><Ico><path d="M9 15V26" strokeDasharray="2 1" /><path d="M12 20h7M15 17l-3 3l3 3" /><rect x="20" y="15" width="7" height="11" fill="#2f7f88" stroke="#6cb3b0" /><text x="3" y="11" fontSize="9" fill={L} stroke="none">name</text></Ico></Tool>
      <Tool label="Show envelopes" on><Ico><path d="M4 8Q11 2 18 8Q11 13 4 8Z" fill="#2c6a35" stroke="none" /><circle cx="11" cy="8" r="2" fill="#cde" stroke="none" /><path d="M12 24L17 15L23 23M11 22h3v3h-3zM16 13h3v3h-3zM22 21h3v3h-3z" stroke="#333" /></Ico></Tool>
      <Tool label="New envelope"><Ico><path d="M7 22L15 9L24 16M5 22h3v3H5zM14 8h3v3h-3zM22 15h3v3h-3zM7 4v7M4 6l6 4M10 6l-6 4" stroke={G} /></Ico></Tool>
      <Tool label="Envelope page"><Ico><path d="M11 5H22V24H6V10ZM11 5V10H6" strokeWidth="1.300" /><path d="M9 20L14 14L19 20" stroke={G} strokeWidth="1.800" /><circle cx="9" cy="20" r="2" fill={G} stroke="none" /><circle cx="14" cy="14" r="2" fill={G} stroke="none" /><circle cx="19" cy="20" r="2" fill={G} stroke="none" /></Ico></Tool>
      <Tool label="Freeze"><FaRegSnowflake size={19} color={L} /></Tool>
      <Tool label="Apply FX"><Ico><path d="M4 5H9M4 5V12M4 8H8M11 5L16 12M16 5L11 12" strokeWidth="1.400" /><path d="M19 6Q24 7 24 14M21 12l3 3l3-3" stroke={G} strokeWidth="1.600" /><path d="M7 18l2 5l2-8l2 9l2-6l2 3l2-2l4 1" /></Ico></Tool>
      <Tool label="Overlap"><Ico><rect x="12" y="14" width="12" height="6" fill="#999" stroke="none" /><rect x="4" y="9" width="13" height="7" fill={L} stroke="none" /></Ico></Tool>
      <Tool label="Crossfade" on><Ico><path d="M5 5V24H22Z" fill="#222" stroke="none" /><path d="M22 4V23M22 5L14 13L22 22" stroke="#333" /></Ico></Tool>
      <Tool label="Group items" on><Ico><path d="M10 5h9v9h-9zM5 14h9v9H5zM14 11h9v9h-9z" stroke="#333" /></Ico></Tool>
      <Tool label="Grid items"><Ico><rect x="3" y="5" width="6" height="4" fill={L} /><path d="M12 5h6v4h-6zM20 5h5v4h-5zM3 12h6v4H3zM12 12h6v4h-6zM20 12h5v4h-5zM3 19h6v4H3zM12 19h6v4h-6zM20 19h5v4h-5z" /></Ico></Tool>
      <Tool label="Move envelopes" on><Ico><path d="M7 15V7H16V19H24" stroke="#222" /><path d="M4 13h5v5H4zM13 5h5v5h-5zM14 17h5v5h-5zM22 17h5v5h-5z" fill="#222" stroke="none" /><path d="M5 24H14M7 22l-2 2l2 2M12 22l2 2l-2 2" stroke="#222" /></Ico></Tool>
      <Tool label="Unfreeze"><span className="relative"><FaRegSnowflake size={19} color={L} /><svg className="absolute -right-[2px] -bottom-[2px]" width="9" height="9" viewBox="0 0 9 9" stroke="#e04040" strokeWidth="2.500"><path d="M1 1L8 8M8 1L1 8" /></svg></span></Tool>
      <Tool label="Ripple off"><span className="flex flex-col items-center gap-[3px] text-[9px]"><span className="h-[9px] w-[17px] border border-[#111] bg-linear-to-r from-[#111] via-[#222] to-[#777]" />off</span></Tool>
      <Tool label="Explode"><Ico><path d="M9 12V6L11 4L14 6H19V12Z" /><path d="M10 15L8 20M14 14V20M18 15L20 20" /><path d="M3 22h7v3H3zM12 22h4v3h-4zM18 22h7v3h-7z" fill={G} stroke="none" /></Ico></Tool>
    </div>
  </div>
);

/* ---------- arrange view ---------- */

const X0 = 438;
const BAR = 134.56;
const pct = (x: number) => `${((x - X0) / 1369) * 100}%`;

const Ruler = () => (
  <svg className="block h-[27px] w-full bg-[#a9a9a9]">
    {range(11).map((i) => {
      const x = 359 + i * BAR;
      return (
        <g key={i}>
          {i > 0 && <line x1={pct(x)} x2={pct(x)} y1="0" y2="27" stroke="#000" />}
          <line x1={pct(x + BAR / 2)} x2={pct(x + BAR / 2)} y1="8" y2="27" stroke="#555" />
          <line x1={pct(x + BAR / 4)} x2={pct(x + BAR / 4)} y1="21" y2="27" stroke="#000" />
          <line x1={pct(x + (BAR * 3) / 4)} x2={pct(x + (BAR * 3) / 4)} y1="21" y2="27" stroke="#000" />
          {i > 0 && <text x={pct(x + 4)} y="12" fontSize="12" fontWeight="bold" fill="#111">{i + 1}</text>}
          {i > 0 ? (
            <text x={pct(x + BAR / 2 + 4)} y="18" fontSize="10" fill="#444">{i + 1}.3</text>
          ) : (
            <text x="0" y="18" fontSize="10" fill="#444">3</text>
          )}
        </g>
      );
    })}
  </svg>
);

const kicks = [627, 694, 761, 828, 896, 963, 1032, 1098, 1165, 1214, 1233, 1283, 1317, 1334, 1383, 1400, 1436, 1485, 1502, 1551, 1586, 1603, 1652, 1687, 1704, 1754, 1772];
const ghosts = [663, 729, 745, 796, 863, 882, 932, 1000, 1015, 1068, 1117, 1134, 1149, 1200, 1251, 1300, 1351, 1417, 1425, 1470, 1520, 1570, 1620, 1671, 1679, 1738];
const hats = [
  [728, 4], [743, 16], [795, 3], [863, 4], [879, 15], [931, 3], [998, 4], [1014, 17], [1065, 4], [1116, 3], [1131, 4], [1147, 4],
  [1198, 7], [1234, 3], [1250, 2], [1266, 4], [1299, 13], [1333, 4], [1351, 2], [1367, 4], [1400, 12], [1424, 3], [1469, 4],
  [1502, 4], [1519, 2], [1534, 5], [1568, 13], [1602, 4], [1619, 2], [1635, 4], [1652, 4], [1669, 2], [1677, 3], [1687, 5], [1697, 3], [1737, 4], [1771, 5],
];

const kickPath = (x: number) => {
  const big = x === 1165 || x === 627 ? 3 : 0;
  const up = 13 + (x % 3) + big;
  const c = 88;
  return `M${x - 2} ${c}L${x - 1} ${c - up}L${x} ${c - up}L${x + 2} ${c - 5}L${x + 4} ${c - 3}L${x + 6} ${c - 2}L${x + 12} ${c}L${x + 6} ${c + 2}L${x + 4} ${c + 3}L${x + 2} ${c + 5}L${x + 1} ${c + up - 3}L${x} ${c + up - 3}Z`;
};

const Tag = () => (
  <span className="flex h-[13px] w-[14px] items-center justify-center border border-black bg-[#ddd] text-[8px] leading-none font-bold text-black">FX</span>
);

const ScrollArrow = ({ d, label }: { d: string; label: string }) => (
  <button aria-label={label} className="flex size-[16px] shrink-0 items-center justify-center">
    <svg width="8" height="8" viewBox="0 0 8 8" fill="#8b8b8b"><path d={d} /></svg>
  </button>
);

const zoomBtn = "flex h-[15px] w-[16px] items-center justify-center border border-black bg-[#444] text-[14px] leading-none text-[#ccc]";

const Grip = ({ vertical }: { vertical?: boolean }) => (
  <span className={clsx("flex", vertical ? "flex-col gap-[2px]" : "gap-px")}>
    {range(3).map((i) => <span key={i} className={vertical ? "h-[2px] w-[11px] bg-[#8b8b8b]" : "h-[11px] w-[2px] bg-[#8b8b8b]"} />)}
  </span>
);

const Arrange = () => (
  <div className="relative min-w-0 flex-1 text-[11px]">
    <div className="h-[17px] bg-[#3c3c3c]" />
    <div className="h-[14px] bg-[#8c8c8c]" />
    <div className="h-[11px] bg-[#4d4d4d]" />
    <Ruler />
    <div className="flex">
      <div className="relative min-w-0 flex-1 border-r border-black">
        <div className="h-[13px] border-b border-black bg-[#292929]" />
        <div className="relative h-[176px] overflow-hidden border-t border-[#7b9ce4] bg-[#6186d6]">
          <svg className="absolute inset-0 h-full w-full" viewBox="439 0 1351 176" preserveAspectRatio="none" fill="#2a3442">
            <rect x="438" y="87.500" width="1352" height="1" />
            {kicks.map((x) => <path key={x} d={kickPath(x)} />)}
            {ghosts.map((x) => <path key={x} d={`M${x - 3} 88l1-1.500h4l2 1.500l-2 1.500h-4z`} />)}
          </svg>
          <div className="relative flex items-center gap-[3px] px-[2px] pt-px text-[#1f2b45]"><Tag />&lt;&lt; Kick out_1.wav</div>
        </div>
        <div className="mt-[2px] h-[23px] border-y border-black bg-[#b4a8d6]">
          <div className="relative h-full">
            <svg className="absolute inset-0 h-full w-full" viewBox="439 0 1351 21" preserveAspectRatio="none" fill="#2f2b3c">
              <rect x="507" y="9.500" width="1283" height="1" />
              {hats.map(([x, w]) => <rect key={x} x={x} y="8.500" width={w} height="3" />)}
            </svg>
            <span className="relative px-px leading-[18px] text-[#2a2738]">&lt;&lt; HH_1.wav</span>
          </div>
        </div>
        <div className="mt-[2px] h-[54px] border-t border-black bg-[#b9617c]">
          <div className="flex items-center gap-[3px] px-[2px] pt-px text-[#31202a]"><Tag />&lt;&lt;temp_3f8110fe-glued</div>
        </div>
        <div className="absolute top-[13px] left-[14%] h-[202px] bg-[repeating-linear-gradient(180deg,#eba53a_0,#eba53a_5px,transparent_5px,transparent_8px)] bg-[length:1px_100%] bg-no-repeat pt-[59px] pl-[4px] text-[10px] text-[#eba53a]">
          <p>Marker 2</p>
          <p className="mt-[107px]">Marker 2</p>
        </div>
      </div>
      <div className="flex w-[16px] flex-col items-center bg-[#333]">
        <ScrollArrow label="Scroll up" d="M4 1L8 7H0Z" />
        <button aria-label="Vertical scroll" className="mt-[11px] flex h-[19px] w-[16px] items-center justify-center border border-black bg-[#484848]"><Grip vertical /></button>
        <div className="flex-1" />
        <ScrollArrow label="Scroll down" d="M4 7L8 1H0Z" />
        <button aria-label="Zoom in vertically" className={clsx(zoomBtn, "mt-[2px]")}>+</button>
        <span className="my-[2px] h-[3px] w-[16px] bg-[#666]" />
        <button aria-label="Zoom out vertically" className={zoomBtn}>−</button>
      </div>
    </div>
    <div className="mr-[16px] flex h-[17px] items-center border border-black bg-[#2f2f2f]">
      <ScrollArrow label="Scroll left" d="M6 0V8L1 4Z" />
      <button aria-label="Horizontal scroll" className="ml-[5px] flex h-[15px] w-[72px] items-center justify-center border border-[#222] bg-[#484848]"><Grip /></button>
      <div className="flex-1" />
      <ScrollArrow label="Scroll right" d="M2 0V8L7 4Z" />
      <button aria-label="Zoom in" className={clsx(zoomBtn, "ml-[2px]")}>+</button>
      <span className="mx-[2px] h-[15px] w-[3px] bg-[#666]" />
      <button aria-label="Zoom out" className={zoomBtn}>−</button>
    </div>
    {/* play cursor */}
    <div className="absolute top-[44px] bottom-[17px] left-[49.300%] border-l border-white">
      <svg className="absolute -top-[1px] -left-[9px]" width="17" height="10" viewBox="0 0 17 10"><path d="M1 .5H16L8.500 9Z" fill="#d8d8d8" stroke="#666" /></svg>
    </div>
  </div>
);

/* ---------- mixer ---------- */

const Slot = ({ children, off }: { children?: React.ReactNode; off?: boolean }) =>
  children ? (
    <button
      className={clsx(
        "mb-px block h-[15px] w-full overflow-hidden border bg-[#2b2f30] px-px text-center text-[9px] leading-[13px] whitespace-nowrap",
        off ? "border-[#bb5a5a] text-[#d98d8d]" : "border-[#3a8ba3] text-[#7fc9de]",
      )}
    >
      {children}
    </button>
  ) : (
    <div className="mx-px mb-px h-[15px] border border-[#363838] bg-[#2e3030]" />
  );

const ListScroll = () => (
  <div className="flex justify-between px-[3px] pt-[2px]">
    <span className="h-[9px] w-[31px] border border-[#555]" />
    <button aria-label="More" className="flex h-[9px] w-[31px] items-center justify-center bg-[#555]">
      <svg width="6" height="3" viewBox="0 0 6 3" fill="#bbb"><path d="M0 0h6L3 3z" /></svg>
    </button>
  </div>
);

const Meter = ({ peak }: { peak: string }) => (
  <div className="flex flex-1 flex-col overflow-hidden bg-[linear-gradient(90deg,#2b2d2d_4px,#353838_4px,#353838_11px,#2b2d2d_11px,#2b2d2d_13px,#353838_13px,#353838_20px,#2b2d2d_20px)] pt-[4px] text-center text-[9px] font-bold text-[#7d7f7f]">
    <span className="mx-[4px] h-[16px] overflow-hidden bg-[#222424] text-[10px] leading-[16px] whitespace-nowrap text-[#bdbdbd]">{peak}</span>
    {[6, 18, 30, 42, 54].map((n) => <span key={n} className="h-[33px] leading-[33px]">-{n}-</span>)}
  </div>
);

const Knob = ({ low }: { low?: boolean }) => (
  <svg width="18" height="18" viewBox="0 0 18 18" className="shrink-0">
    <circle cx="9" cy="9" r="8" fill="#262626" stroke="#b5b5b5" strokeWidth="1.600" />
    <path d={low ? "M9 9L15 10.500" : "M9 9L13 14"} stroke="#ddd" strokeWidth="1.500" />
  </svg>
);

const Strip = ({ track: t }: { track: Track }) => (
  <section className="w-[79px] shrink-0 border-r border-black bg-[#2b2b2b]">
    <div className="ml-[2px] h-[96px] w-[74px] border border-t-0 border-[#1d1d1d]">
      {range(6).map((i) => (i === 5 && t.num === 21 ? <ListScroll key={i} /> : <Slot key={i}>{t.fx[i]}</Slot>))}
    </div>
    <div className="mt-[4px] ml-[2px] h-[92px] w-[74px] border border-[#1d1d1d] pt-px">
      {range(5).map((i) =>
        t.sends?.[i] ? (
          <div key={i} className="mb-px flex h-[15px] items-center">
            <button className="h-[13px] w-[52px] border-y border-[#72e0b8] text-left text-[9px] leading-[11px] whitespace-nowrap text-[#67c79c]">
              <span className="px-[2px]">{t.sends[i]}</span>
            </button>
            <span className="mr-[3px] h-[13px] w-[6px] border border-l-[#33604e] border-[#484848]" />
            <input type="checkbox" aria-label={`Mute send ${t.sends[i]}`} className="size-[10px] appearance-none rounded-[1px] border border-[#72e0b8]" />
          </div>
        ) : (
          <Slot key={i} />
        ),
      )}
      {t.num === 5 && <ListScroll />}
    </div>
    <div className="h-[6px] border-b-2 border-black" />
    <div className="flex h-[22px] items-center bg-linear-to-b from-[#5a5a5a] to-[#4c4c4c]">
      <span className="w-[27px] pl-[7px] text-[11px] text-[#b4b4b4]">{t.num}</span>
      <IoButton io={t.io} />
    </div>
    <div className={clsx("relative pt-[5px] pb-[4px]", t.color, t.selected && "shadow-[inset_0_0_0_1px_#dcecd9]")}>
      <div className="px-[5px]">
        <div className="flex items-center justify-between">
          <Mini label="Mute" className="h-[17px] w-[21px]"><MuteIcon /></Mini>
          <Mini label="Solo" className="h-[17px] w-[21px]"><SoloIcon /></Mini>
          <Knob low={t.num === 24} />
        </div>
        <div className="mt-[6px]"><PanSlider value={t.panPos} label={`${t.name} pan`} /></div>
        <Readout className="mt-[6px]">{t.pan ?? "center"}</Readout>
        <div className="mt-[5px] flex justify-between">
          <div className="w-[46px]">
            <div className="flex h-[195px] border border-[#101010] bg-[#232323]">
              <div className="w-[20px] pt-[2px] pl-[2px]"><Fader value={t.fader} max={157} label={`${t.name} volume`} /></div>
              {t.io === "midi" ? (
                <div className="flex flex-1 border-l border-[#111] bg-[#2e3131] py-[16px] pl-[4px]"><div className="w-[14px] bg-[repeating-linear-gradient(180deg,#2a2d2d_0,#2a2d2d_6px,#363939_6px,#363939_7px)]" /></div>
              ) : (
                <Meter peak={t.peak ?? "-inf"} />
              )}
            </div>
            <Readout className="mt-[4px]">{t.vol}</Readout>
          </div>
          <div className="flex w-[18px] flex-col gap-[4px]">
            <Mini label="Phase" className="h-[18px]"><PhaseIcon /></Mini>
            <Mini label="Envelopes" className="h-[16px]"><EnvIcon /></Mini>
            <Mini label="FX" on className="h-[18px]"><FxIcon /></Mini>
            <Mini label="FX bypass" className="h-[12px]"><span className="h-[4px] w-[10px] border border-[#173039] bg-[#7cc0d6]" /></Mini>
            <Mini label="Input" className="mt-auto h-[17px]"><InputIcon /></Mini>
            <Mini label="Monitor" on={t.monitor} className="h-[18px]"><WavesIcon dark={t.monitor} /></Mini>
            <Mini label="Record arm" className="h-[18px]"><RecDot /></Mini>
            <Mini label="Record input" className="h-[14px]">in</Mini>
          </div>
        </div>
      </div>
      <p className="mt-[9px] h-[16px] overflow-hidden bg-[#1a0d10]/35 text-center text-[13px] leading-[16px] font-bold whitespace-nowrap text-[#e6c52e]">{t.name}</p>
      {t.folder && <span className="absolute bottom-0 left-0 h-[20px] w-[12px] border-b-[4px] border-l-[2px] border-[#e6c52e]" />}
    </div>
  </section>
);

const Mixer = () => (
  <div className="mt-[8px]">
    <div className="flex overflow-hidden">
      {tracks.map((t) => <Strip key={t.num} track={t} />)}
    </div>
    <div className="flex h-[18px] items-center border-y-2 border-black bg-[#2f2f2f]">
      <ScrollArrow label="Scroll left" d="M6 0V8L1 4Z" />
      <button aria-label="Mixer scroll" className="ml-px flex h-full w-[493px] items-center justify-center border-x border-black bg-[#484848]"><Grip /></button>
      <div className="flex-1" />
      <ScrollArrow label="Scroll right" d="M2 0V8L7 4Z" />
    </div>
    <div className="flex h-[15px] items-center gap-[3px] bg-[#141414] pl-[3px] text-[10px] text-[#ccc]">
      <span className="w-[2px] text-[#e0d0a0]">!</span>
      <button className="flex h-full w-[61px] items-center gap-[4px] border-x border-b border-[#777] bg-[#3c3c3c] px-[5px] font-bold">
        <span className="flex size-[9px] items-center justify-center border border-[#aaa] text-[8px] leading-none font-normal">x</span>
        Mixer
      </button>
    </div>
  </div>
);

const scaleSide = [12, 6, 0, 6, 12, 18, 24, 30, 36, 42];

const scaleRow = "flex flex-1 items-center";

const Master = () => (
  <aside className="flex w-[113px] flex-col bg-[#333] pl-[5px]">
    <div className="flex-1 border-x border-[#1d1d1d] bg-[#2b2b2b] px-[2px] pt-px">
      {masterFx.map((f, i) => <Slot key={i} off={f.off}>{f.name}</Slot>)}
      {range(19).map((i) => <Slot key={i} />)}
    </div>
    <div className="h-[4px] border-b-2 border-black" />
    <div className="flex h-[23px] items-center bg-linear-to-b from-[#5a5a5a] to-[#4c4c4c] pl-[9px]">
      <svg width="17" height="14" viewBox="0 0 17 14" fill="none" stroke="#aaa"><path d="M2 0V14M6.500 0V14M11 0V14M15.500 0V14M.5 9h3M5 4h3M9.500 3h3M14 11h3" /></svg>
      <span className="ml-[14px] flex"><IoButton io="send" /></span>
    </div>
    <div className="bg-[#444d51] px-[7px] pt-[5px] pb-[5px]">
      <div className="flex">
        <Mini label="Mute" className="h-[17px] w-[21px]"><MuteIcon /></Mini>
        <Mini label="Solo" className="ml-[4px] h-[17px] w-[21px]"><SoloIcon /></Mini>
        <Mini label="Mono" className="ml-auto h-[17px] w-[18px]"><svg width="12" height="8" viewBox="0 0 12 8" fill="none" stroke="#d8d0b4"><circle cx="4" cy="4" r="3" /><circle cx="8" cy="4" r="3" /></svg></Mini>
        <Mini label="Envelopes" className="ml-[4px] h-[17px] w-[18px]"><EnvIcon /></Mini>
      </div>
      <div className="mt-[2px] flex gap-[4px]">
        <div className="flex-1 pt-[5px]">
          <PanSlider label="Master pan" />
          <Readout className="mt-[5px]">center</Readout>
        </div>
        <div className="flex w-[18px] flex-col justify-between">
          <Mini label="FX" on className="h-[18px]"><FxIcon /></Mini>
          <Mini label="FX bypass" className="h-[12px]"><span className="h-[4px] w-[10px] border border-[#173039] bg-[#7cc0d6]" /></Mini>
        </div>
      </div>
      <div className="relative mt-[5px] flex h-[322px] border border-[#101010] bg-[#232323]">
        <div className="w-[20px] pt-[3px] pl-[2px]"><Fader value={205} max={283} label="Master volume" tall /></div>
        <div className="flex flex-1 bg-[#303333] text-[10px] font-bold text-[#8a8c8c]">
          <div className="w-[19px] bg-[#2d2f2f] pt-[27px] pl-[5px]">
            <div className="flex h-[276px] flex-col">
              {scaleSide.map((n, i) => <span key={i} className={clsx(scaleRow, i < 2 && "bg-[#252727]")}>{n}{i > 1 && "-"}</span>)}
            </div>
          </div>
          <div className="flex-1 bg-[#343737] pt-[17px]">
            <div className="flex h-[277px] flex-col items-center">
              {range(10).map((i) => <span key={i} className={scaleRow}>-{i * 6}-</span>)}
            </div>
          </div>
          <div className="w-[19px] bg-[#2d2f2f] pt-[27px] pr-[4px]">
            <div className="flex h-[276px] flex-col">
              {scaleSide.map((n, i) => <span key={i} className={clsx(scaleRow, "justify-end", i < 2 && "bg-[#252727]")}>{i > 1 && "-"}{n}</span>)}
            </div>
          </div>
        </div>
        <div className="absolute inset-x-0 top-[11px] flex justify-end gap-[10px] pr-[8px] text-[9px] font-bold text-[#d0d0d0]"><span>-38.3</span><span>-38.4</span></div>
        <div className="absolute inset-x-0 bottom-[2px] flex justify-end gap-[10px] pr-[8px] text-[9px] font-bold text-[#d0d0d0]"><span>-94.1</span><span>-94.2</span></div>
      </div>
      <Readout className="mt-[4px]">0.00</Readout>
      <p className="-mx-[7px] mt-[9px] h-[16px] bg-[#2d2d2d] pl-[7px] text-center text-[13px] leading-[16px] font-bold text-[#c8c8c8]">MASTER</p>
    </div>
    <div className="h-[6px] border-t border-black" />
  </aside>
);

/* ---------- window chrome ---------- */

const taskBtn = "flex h-[40px] items-center border-b-2 border-[#75b7ec] text-[11px] text-white";

const Taskbar = () => (
  <footer className="flex h-[40px] items-center bg-[#020b10] font-['Noto_Sans',sans-serif] text-[11px] text-white">
    <button aria-label="Start" className="w-[48px] pl-[16px]">
      <svg width="16" height="16" viewBox="0 0 16 16" fill="#fff"><path d="M0 2.200L6.500 1.300V7.500H0ZM7.500 1.200L16 0V7.500H7.500ZM0 8.500H6.500V14.700L0 13.800ZM7.500 8.500H16V16L7.500 14.800Z" /></svg>
    </button>
    <button aria-label="Task view" className="w-[55px] pl-[14px]">
      <svg width="20" height="16" viewBox="0 0 20 16" fill="none" stroke="#fff" strokeWidth="1.200"><path d="M4.500 1.500h11v13h-11zM2.500 3.500H.5v9h2M17.500 3.500h2v9h-2" /></svg>
    </button>
    <button className={clsx(taskBtn, "mr-[9px] w-[152px] gap-[5px] pl-[6px]")}>
      <svg width="23" height="23" viewBox="0 0 23 23">
        <circle cx="12" cy="12" r="8" fill="#1a6fd8" />
        <path d="M3 6Q0 12 3 17Q7 23 13 22Q21 21 22 12Q22 5 16 1Q18 5 17 9Q19 15 13 17Q8 17 7 12L11 10Q8 9 7 6Q5 6 4 3Q3 4 3 6Z" fill="#f5521f" />
        <path d="M16 1Q22 5 22 12Q21 19 16 20Q21 13 17 9Q18 5 16 1Z" fill="#ffcb2e" />
      </svg>
      С Сонара на Рипе...
    </button>
    <button className={clsx(taskBtn, "mr-[5px] w-[152px] gap-[11px] pl-[9px]")}>
      <svg width="14" height="20" viewBox="0 0 14 20"><path d="M0 1H10V19L0 18Z" fill="#f7dc86" /><path d="M10 1H12V13L14 14V19H10L3 20L10 17Z" fill="#e5b94e" /></svg>
      Opera Downloads
    </button>
    <button className={clsx(taskBtn, "w-[160px] gap-[6px] bg-[#323b3c] pl-[11px]")}>
      <ReaperLogo className="h-[23px] w-[21px]" />
      RR2 - REAPER v5.76...
    </button>
    <div className="ml-auto flex items-center">
      <svg width="12" height="7" viewBox="0 0 12 7" fill="none" stroke="#fff" strokeWidth="1.300"><path d="M.5 6.500L6 1L11.500 6.500" /></svg>
      <svg className="ml-[10px]" width="17" height="13" viewBox="0 0 17 13" fill="none" stroke="#fff"><path d="M.5 4.500H3L7 1V12L3 8.500H.5ZM9 5Q10.500 6.500 9 8" /><path d="M11 3.500Q13.500 6.500 11 9.500M13 1.500Q17 6.500 13 11.500" stroke="#888" /></svg>
      <span className="ml-[9px]">ENG</span>
      <p className="ml-[12px] text-center leading-[18px]">15:50<br />04.03.2018</p>
      <span className="mr-[4px] ml-[5px] h-[40px] border-l border-[#555]" />
    </div>
  </footer>
);

const TitleBar = () => (
  <header className="border-b-2 border-[#eee] bg-white font-['Noto_Sans',sans-serif] text-[11px] text-black">
    <div className="flex h-[23px] items-center pl-[2px]">
      <ReaperLogo className="mr-[5px] h-[17px] w-[16px]" />
      <h1>RR2 - REAPER v5.76/x64 - Registered to Maxim Kokarev (Licensed for personal/small business use)</h1>
      <div className="mr-[20px] ml-auto flex items-center gap-[35px]">
        <button aria-label="Minimize"><svg width="10" height="10" viewBox="0 0 10 10" stroke="#000"><path d="M0 5.500H10" /></svg></button>
        <button aria-label="Restore"><svg width="10" height="10" viewBox="0 0 10 10" fill="none" stroke="#000"><path d="M.5 2.500h7v7h-7zM2.500 2.500V.5h7v7h-2" /></svg></button>
        <button aria-label="Close"><svg width="11" height="11" viewBox="0 0 11 11" stroke="#000"><path d="M.5.500L10.500 10.500M10.500.500L.5 10.500" /></svg></button>
      </div>
    </div>
    <nav className="flex h-[19px] items-center gap-[14px] pr-[8px] pl-[7px] leading-[19px]">
      {["File", "Edit", "View", "Insert", "Item", "Track", "Options", "Actions", "Extensions", "Help"].map((m) => (
        <a key={m} href="#">{m}</a>
      ))}
      <span className="ml-auto">[44.1kHz 24bit WAV : 7/7ch 704spls ~17/16ms ASIO]</span>
    </nav>
  </header>
);

const App = () => (
  <div className="flex min-h-screen flex-col overflow-hidden bg-[#333] font-['Liberation_Sans',Arial,sans-serif]">
    <TitleBar />
    <Transport />
    <Toolbar />
    <div className="flex flex-1">
      <main className="flex min-w-0 flex-1 flex-col">
        <div className="flex">
          <div className="mr-[8px] w-[430px] shrink-0 pt-[3px] pl-[2px]">
            <SideTools />
            <div className="mt-[5px] flex h-[13px] justify-end bg-[#3b3b3b]">
              <span className="w-[19px] border-l-2 border-black bg-[#22282a]" />
            </div>
            <TrackPanel />
            <p className="border-t border-[#777] pl-[4px] text-[11px] leading-[17px] whitespace-pre text-[#aaa]">CPU: 16.7%  RAM: 847MB  last save: 00:43</p>
          </div>
          <Arrange />
        </div>
        <Mixer />
      </main>
      <Master />
    </div>
    <Taskbar />
  </div>
);

export default App;
